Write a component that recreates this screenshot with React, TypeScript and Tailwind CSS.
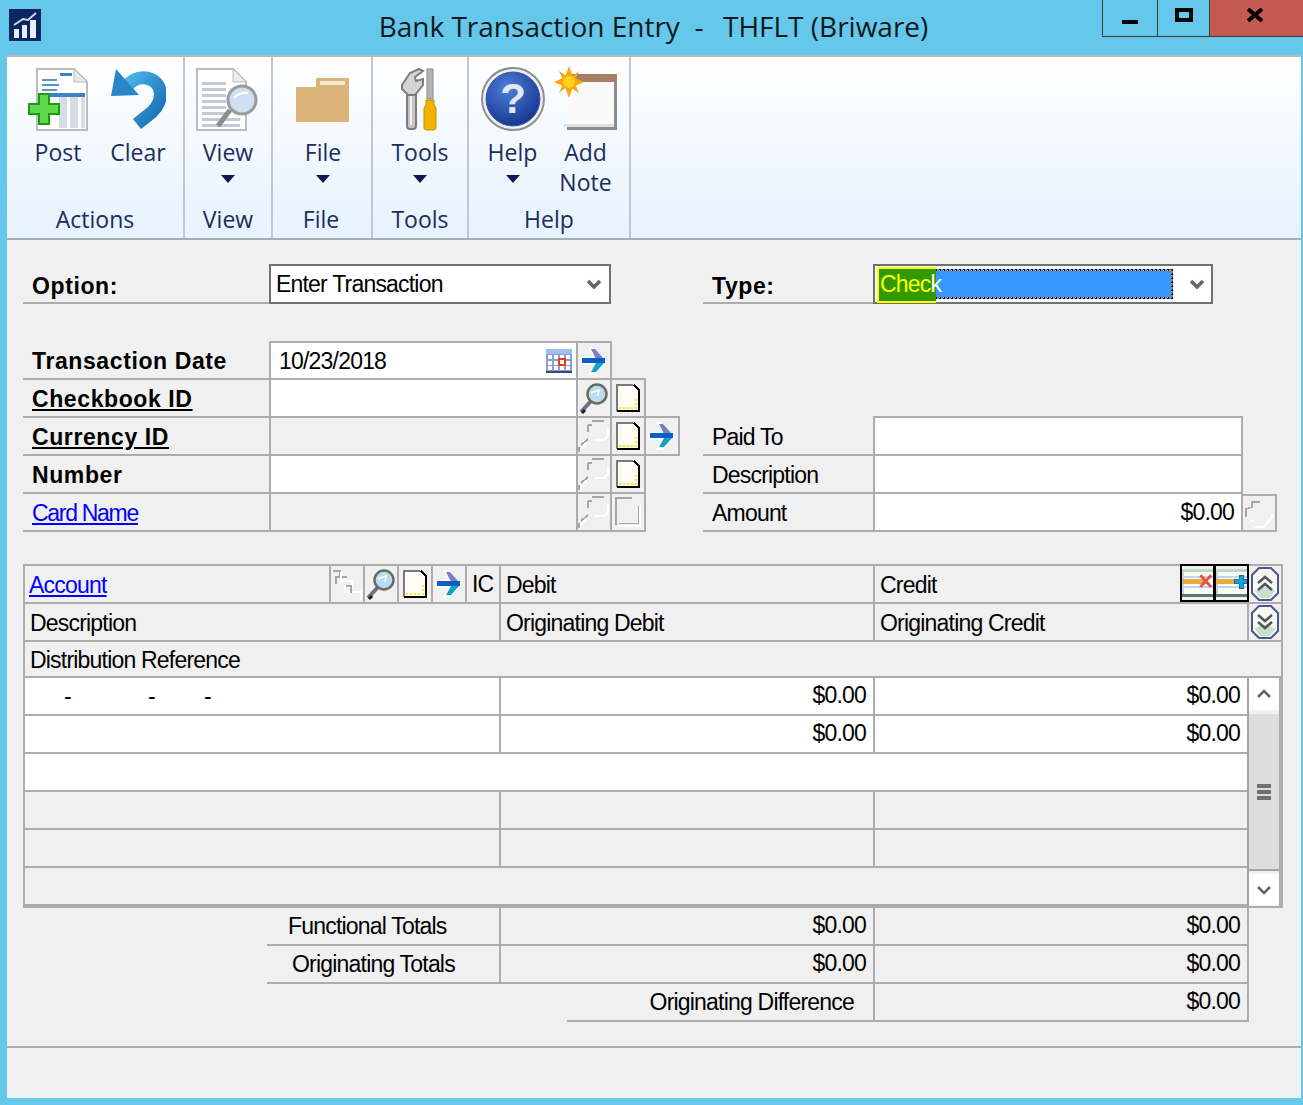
import type { ReactNode } from 'react'

function AppIcon() {
  return (
    <svg width="32" height="32" viewBox="0 0 32 32" className="block">
      <rect width="32" height="32" fill="#0b2660" />
      <rect x="5" y="20" width="5" height="9" fill="#e8eef5" />
      <rect x="13" y="16" width="5" height="13" fill="#e8eef5" />
      <rect x="21" y="11" width="6" height="18" fill="#e8eef5" />
      <path d="M5 16 L14 10 L19 11 L27 4" stroke="#cfd8e6" strokeWidth="2" fill="none" />
    </svg>
  )
}

function PostIcon() {
  return (
    <svg width="60" height="64" viewBox="0 0 60 64" className="block">
      <path d="M9 1 H46 L59 14 V62 H9 Z" fill="#fff" stroke="#bcbcbc" strokeWidth="2" />
      <path d="M46 1 V14 H59 Z" fill="#e8e8e8" stroke="#bcbcbc" />
      <rect x="32" y="5" width="12" height="3" fill="#3a83c8" />
      <rect x="14" y="11" width="15" height="2" fill="#5b94cf" />
      <rect x="14" y="16" width="17" height="2" fill="#5b94cf" />
      <rect x="14" y="21" width="15" height="2" fill="#5b94cf" />
      <rect x="14" y="25" width="43" height="4" fill="#3a83c8" />
      <rect x="31" y="29" width="8" height="31" fill="#d6dde6" />
      <rect x="42" y="29" width="8" height="31" fill="#d6dde6" />
      <rect x="53" y="29" width="4" height="31" fill="#d6dde6" />
      <path d="M11 26 H21 V36 H31 V46 H21 V56 H11 V46 H1 V36 H11 Z" fill="#5fd84a" stroke="#1e9a12" strokeWidth="2" />
    </svg>
  )
}

function ClearIcon() {
  return (
    <svg width="56" height="64" viewBox="0 0 56 64" className="block">
      <defs>
        <linearGradient id="clr" x1="0" y1="0" x2="1" y2="1">
          <stop offset="0" stopColor="#4cb5ea" />
          <stop offset="1" stopColor="#1469b0" />
        </linearGradient>
      </defs>
      <path d="M27 56 L42 44 C54 33 54 13 36 10 C28 9 22 12 17 18" stroke="url(#clr)" strokeWidth="13" fill="none" />
      <path d="M6 1 L1 28 L29 27 Z" fill="#2a86c9" />
    </svg>
  )
}

function ViewIcon() {
  return (
    <svg width="64" height="64" viewBox="0 0 64 64" className="block">
      <path d="M1 1 H37 L50 14 V62 H1 Z" fill="#fff" stroke="#bdbdbd" strokeWidth="2" />
      <path d="M37 1 V14 H50 Z" fill="#ececec" stroke="#bdbdbd" />
      {[14, 20, 26, 32, 38, 44, 50, 56].map((y) => (
        <rect key={y} x="6" y={y} width={y > 44 ? 38 : 24} height="3" fill="#c3cad4" />
      ))}
      <path d="M34 42 L22 58" stroke="#8c8c8c" strokeWidth="5" />
      <circle cx="46" cy="32" r="14" fill="#cfe0f3" stroke="#9b9b9b" strokeWidth="3" />
      <path d="M38 30 Q44 24 52 25" stroke="#fff" strokeWidth="2" fill="none" />
    </svg>
  )
}

function FolderIcon() {
  return (
    <svg width="56" height="64" viewBox="0 0 56 64" className="block">
      <path d="M1 19 H21 V11 Q21 10 23 10 H54 V54 H1 Z" fill="#dcb479" />
      <rect x="25" y="13" width="25" height="4" fill="#f3e6cc" />
    </svg>
  )
}

function ToolsIcon() {
  return (
    <svg width="40" height="64" viewBox="0 0 40 64" className="block">
      <rect x="7" y="24" width="9" height="37" rx="3" fill="#c4c4c4" stroke="#7d7d7d" strokeWidth="2" />
      <rect x="10" y="27" width="2" height="30" fill="#efefef" />
      <path d="M2 17 L10 5 L19 1 L23 3 L15 9 L16 13 L23 11 V17 L15 27 H8 L2 21 Z" fill="#d4d4d4" stroke="#7d7d7d" strokeWidth="2" />
      <rect x="27" y="1" width="6" height="30" fill="#b4b4b4" stroke="#888" />
      <path d="M26 32 H34 V37 L36 40 V60 Q36 62 33 62 H27 Q24 62 24 60 V40 L26 37 Z" fill="#f0b400" stroke="#c98f00" />
    </svg>
  )
}

function HelpIcon() {
  return (
    <svg width="66" height="66" viewBox="0 0 66 66" className="block">
      <defs>
        <radialGradient id="hlp" cx="0.4" cy="0.3" r="0.8">
          <stop offset="0" stopColor="#4f7fdc" />
          <stop offset="1" stopColor="#0d2f86" />
        </radialGradient>
      </defs>
      <circle cx="33" cy="33" r="31" fill="#eef0f3" stroke="#8d8f94" strokeWidth="2" />
      <circle cx="33" cy="33" r="27" fill="url(#hlp)" stroke="#3a5aa0" />
      <text x="33" y="47" textAnchor="middle" fontFamily="'Liberation Sans', sans-serif" fontWeight="700" fontSize="42" fill="#e4e7ee">?</text>
    </svg>
  )
}

function AddNoteIcon() {
  return (
    <svg width="66" height="66" viewBox="0 0 66 66" className="block">
      <rect x="14" y="16" width="50" height="48" fill="#8d8d8d" />
      <rect x="14" y="8" width="50" height="8" fill="#a87f66" />
      <rect x="14" y="16" width="47" height="42" fill="#fafafa" />
      <rect x="11" y="58" width="50" height="3" fill="#e0e0e0" />
      <g fill="#f6a90c">
        <path d="M16 0 L20 11 L31 16 L20 21 L16 32 L12 21 L1 16 L12 11 Z" />
        <path d="M6 5 L17 12 L26 5 L21 16 L26 27 L15 20 L6 27 L11 16 Z" />
      </g>
      <circle cx="16" cy="16" r="6" fill="#ffd21f" />
    </svg>
  )
}

function DropTriangle() {
  return (
    <svg width="14" height="8" viewBox="0 0 14 8" className="block">
      <path d="M0 0 H14 L7 8 Z" fill="#0d1a55" />
    </svg>
  )
}

function SmallLens() {
  return (
    <svg width="32" height="34" viewBox="0 0 32 34" className="block">
      <path d="M13 20 L3 31" stroke="#6e6e88" strokeWidth="4" />
      <path d="M4 32 L7 29" stroke="#222" strokeWidth="3" />
      <circle cx="19" cy="13" r="9.5" fill="#bcdcf5" stroke="#6b6b60" strokeWidth="2.5" />
      <path d="M13 12 L21 9 L20 15" stroke="#fff" strokeWidth="1.5" fill="none" />
    </svg>
  )
}

function GhostLens() {
  return (
    <svg width="32" height="34" viewBox="0 0 32 34" className="block" shapeRendering="crispEdges">
      <path d="M14 2 H26 M10 6 H14 M10 6 V13" stroke="#a6a6a6" strokeWidth="2" fill="none" />
      <path d="M30 9 V17 L26 21 H16 M9 23 L2 31 V33" stroke="#fff" strokeWidth="2.5" fill="none" />
      <path d="M3 26 L10 20 M1 28 V33" stroke="#a6a6a6" strokeWidth="2" fill="none" />
    </svg>
  )
}

function SmallDoc() {
  return (
    <svg width="26" height="30" viewBox="0 0 26 30" className="block" shapeRendering="crispEdges">
      <path d="M2 1 H18 L25 8 V29 H2 Z" fill="#fffdf6" />
      <path d="M2 28 V2 H18" stroke="#7a7a7a" strokeWidth="2" fill="none" />
      <path d="M19 2 L24 7 V28 H2" stroke="#000" strokeWidth="2" fill="none" />
      {[4, 8, 12, 16, 20].map((x) => (
        <rect key={x} x={x} y="24" width="2" height="2" fill="#ffee00" />
      ))}
      {[16, 20].map((y) => (
        <rect key={y} x="20" y={y} width="2" height="2" fill="#ffee00" />
      ))}
    </svg>
  )
}

function GhostDoc() {
  return (
    <svg width="28" height="32" viewBox="0 0 28 32" className="block" shapeRendering="crispEdges">
      <path d="M2 29 V2 H18" stroke="#a6a6a6" strokeWidth="2" fill="none" />
      <path d="M26 10 V30 H4" stroke="#fff" strokeWidth="2" fill="none" />
      <path d="M24 10 V27 H5" stroke="#a6a6a6" strokeWidth="1" fill="none" />
    </svg>
  )
}

function BlueArrow() {
  return (
    <svg width="30" height="30" viewBox="0 0 30 30" className="block">
      <path d="M13 1 L28 15 L15 29 H9 L15 19 H1 V11 H15 L9 1 Z" fill="#fff" />
      <path d="M12 3 H16 L25 13 H17 Z" fill="#7b7fc4" />
      <rect x="3" y="12" width="23" height="5" fill="#0a5fc4" />
      <path d="M17 17 H25 L17 26 H12 Z" fill="#12a3c9" />
    </svg>
  )
}

function CalendarIcon() {
  return (
    <svg width="26" height="24" viewBox="0 0 26 24" className="block" shapeRendering="crispEdges">
      <rect width="26" height="24" fill="#8b9ed0" />
      <rect width="26" height="5" fill="#9dc0ee" />
      {[2, 8, 14, 20].map((x) =>
        [6, 12, 17].map((y) => <rect key={x + '-' + y} x={x} y={y} width="4" height="4" fill="#fff" />),
      )}
      <rect x="12" y="9" width="8" height="8" fill="#e2400f" />
      <rect x="14" y="11" width="4" height="4" fill="#fff" />
      <rect y="22" width="26" height="2" fill="#3f3f88" />
    </svg>
  )
}

function GhostChain() {
  return (
    <svg width="32" height="34" viewBox="0 0 32 34" className="block" shapeRendering="crispEdges">
      <path d="M2 4 H9 V10 M5 17 V10 H16" stroke="#a6a6a6" strokeWidth="1.5" fill="none" />
      <path d="M10 5 V14 H21 V20 H14 V25 H30 V33" stroke="#fff" strokeWidth="1.5" fill="none" />
      <path d="M15 19 H20 V26" stroke="#a6a6a6" strokeWidth="1.5" fill="none" />
    </svg>
  )
}

function RowIcon({ add }: { add?: boolean }) {
  return (
    <svg width="32" height="28" viewBox="0 0 32 28" className="block" shapeRendering="crispEdges">
      <rect width="32" height="28" fill="#fbfbf4" />
      <rect width="32" height="3" fill="#bcd9c4" />
      <rect y="3" width="2" height="22" fill="#b9d4ef" />
      <rect y="7" width="32" height="2" fill="#bcd4f2" />
      <rect y="17" width="32" height="2" fill="#bcd4f2" />
      <rect y="10" width="26" height="5" fill="#e8ab3c" />
      <rect y="25" width="32" height="3" fill="#5d7675" />
      {add ? (
        <path d="M24 6 H28 V10 H32 V15 H28 V20 H24 V15 H19 V10 H24 Z" fill="#1ba0d6" stroke="#0d6f9e" />
      ) : (
        <path d="M19 6 L30 18 M30 6 L19 18" stroke="#e3534a" strokeWidth="3" shapeRendering="auto" />
      )}
    </svg>
  )
}

function ExpandIcon({ down }: { down?: boolean }) {
  return (
    <svg width="28" height="34" viewBox="0 0 28 34" className="block">
      <path d="M8 1 H20 L27 8 V26 L20 33 H8 L1 26 V8 Z" fill="#f6f8f4" stroke="#4f5590" strokeWidth="2" />
      <path d="M4 24 Q14 16 24 24 L19 31 H9 Z" fill="#c7e0cd" />
      {down ? (
        <path d="M7 10 L14 16 L21 10 M7 17 L14 23 L21 17" stroke="#555" strokeWidth="2.5" fill="none" />
      ) : (
        <path d="M7 16 L14 10 L21 16 M7 23 L14 17 L21 23" stroke="#555" strokeWidth="2.5" fill="none" />
      )}
    </svg>
  )
}

function Chevron({ up, width = 2.5 }: { up?: boolean; width?: number }) {
  return (
    <svg width="14" height="10" viewBox="0 0 14 10" className="block">
      <path d={up ? 'M1 8 L7 2 L13 8' : 'M1 2 L7 8 L13 2'} stroke="#666" strokeWidth={width} fill="none" />
    </svg>
  )
}

function RibbonButton({ icon, label, drop, w = 'w-[80px]' }: { icon: ReactNode; label: ReactNode; drop?: boolean; w?: string }) {
  return (
    <div className={w + ' flex flex-col items-center'}>
      <div className="flex h-[66px] items-end justify-center">{icon}</div>
      <div className="mt-[5px] text-center leading-[30px]">{label}</div>
      {drop && (
        <div className="mt-[8px]">
          <DropTriangle />
        </div>
      )}
    </div>
  )
}

function RibbonGroup({ title, w, pl, labelClass, children }: { title: string; w: string; pl?: string; labelClass?: string; children: ReactNode }) {
  return (
    <div className={w + ' flex h-full flex-col border-r-2 border-[#c3c7cd]'}>
      <div className={'flex h-[148px] justify-center pt-[9px] ' + (pl ?? '')}>{children}</div>
      <div className={'-mt-[1px] text-center leading-[30px] ' + (labelClass ?? '')}>{title}</div>
    </div>
  )
}

function Ribbon() {
  return (
    <div className="flex h-[185px] shrink-0 border-t-[2px] border-b-[2px] border-t-[#b3b7bb] border-b-[#a9adb3] bg-gradient-to-b from-white to-[#e6f2fd] font-['Open_Sans',sans-serif] text-[23px] text-[#1b2c5e]">
      <RibbonGroup title="Actions" w="w-[178px]" pl="pl-[6px]">
        <RibbonButton icon={<PostIcon />} label="Post" />
        <RibbonButton icon={<ClearIcon />} label="Clear" />
      </RibbonGroup>
      <RibbonGroup title="View" w="w-[88px]">
        <RibbonButton icon={<ViewIcon />} label="View" drop />
      </RibbonGroup>
      <RibbonGroup title="File" w="w-[100px]" pl="pl-[2px]" labelClass="pr-[2px]">
        <RibbonButton icon={<FolderIcon />} label="File" drop />
      </RibbonGroup>
      <RibbonGroup title="Tools" w="w-[96px]">
        <RibbonButton icon={<ToolsIcon />} label="Tools" drop />
      </RibbonGroup>
      <RibbonGroup title="Help" w="w-[162px]">
        <RibbonButton icon={<HelpIcon />} label="Help" drop w="w-[73px]" />
        <RibbonButton
          icon={<AddNoteIcon />}
          label={
            <>
              Add
              <br />
              Note
            </>
          }
          w="w-[73px]"
        />
      </RibbonGroup>
    </div>
  )
}

const boldLabel = 'font-bold tracking-[0.6px]'

// one labelled field row of the upper form
function FieldRow({ label, labelClass, white, top, children }: { label: string; labelClass?: string; white?: boolean; top?: boolean; children?: ReactNode }) {
  return (
    <div className={'flex ' + (top ? 'h-[39px]' : 'h-[38px]')}>
      <div className={'flex w-[246px] items-end border-b-2 border-[#ababb0] pl-[9px] pb-[2px] leading-[30px] ' + (labelClass ?? '')}>
        {label}
      </div>
      <div className={'w-[307px] border-b-2 border-l-2 border-[#ababb0] ' + (white ? 'bg-white ' : '') + (top ? 'border-t-2' : '')}>
        {top && (
          <div className="flex h-[35px] items-center justify-between pl-[8px] pr-[4px]">
            <span>10/23/2018</span>
            <CalendarIcon />
          </div>
        )}
      </div>
      {children}
    </div>
  )
}

// raised cells stick out past the row above, so they carry their own top line over it
function IconCell({ children, last, top, raised }: { children: ReactNode; last?: boolean; top?: boolean; raised?: boolean }) {
  return (
    <div className={'flex items-center justify-center border-b-2 border-l-2 border-[#ababb0] ' + (last ? 'w-[36px] border-r-2 ' : 'w-[34px] ') + (top ? 'border-t-2 ' : '') + (raised ? '-mt-[2px] border-t-2' : '')}>
      {children}
    </div>
  )
}

function SelectBox({ w, children }: { w: string; children: ReactNode }) {
  return (
    <div className={w + ' flex h-[40px] items-center border-2 border-[#707070] bg-white'}>
      {children}
    </div>
  )
}

function UpperForm() {
  return (
    <div className="pt-[24px] pl-[16px]">
      <div className="flex">
        <div className="flex h-[40px] w-[246px] items-end border-b-2 border-[#ababb0] pl-[9px] pb-[1px] leading-[30px]">
          <span className={boldLabel}>Option:</span>
        </div>
        <SelectBox w="w-[342px]">
          <span className="flex-1 pl-[5px]">Enter Transaction</span>
          <span className="pr-[8px]">
            <Chevron width={3.5} />
          </span>
        </SelectBox>
        <div className="ml-[92px] flex h-[40px] w-[170px] items-end border-b-2 border-[#ababb0] pl-[9px] pb-[1px] leading-[30px]">
          <span className={boldLabel}>Type:</span>
        </div>
        <SelectBox w="w-[340px]">
          <div className="relative ml-[3px] flex h-[30px] w-[295px] items-center border-2 border-dotted border-black bg-[#3399ff] outline-1 outline-dotted outline-[#e08a00] -outline-offset-2">
            <div className="absolute -left-[3px] -top-[4px] h-[36px] w-[59px] border-2 border-r-0 border-[#ffff00] bg-[#339900]" />
            <span className="relative text-[#ffff00]">
              Chec<span className="text-white">k</span>
            </span>
          </div>
          <span className="ml-auto pr-[7px]">
            <Chevron width={3.5} />
          </span>
        </SelectBox>
      </div>
      <div className="mt-[37px] flex">
        <div className="w-[664px]">
          <FieldRow label="Transaction Date" labelClass={boldLabel} white top>
            <IconCell top last>
              <BlueArrow />
            </IconCell>
          </FieldRow>
          <FieldRow label="Checkbook ID" labelClass={boldLabel + ' underline'} white>
            <IconCell>
              <SmallLens />
            </IconCell>
            <IconCell last raised>
              <SmallDoc />
            </IconCell>
          </FieldRow>
          <FieldRow label="Currency ID" labelClass={boldLabel + ' underline'}>
            <IconCell>
              <GhostLens />
            </IconCell>
            <IconCell>
              <SmallDoc />
            </IconCell>
            <IconCell last raised>
              <BlueArrow />
            </IconCell>
          </FieldRow>
          <FieldRow label="Number" labelClass={boldLabel} white>
            <IconCell>
              <GhostLens />
            </IconCell>
            <IconCell last>
              <SmallDoc />
            </IconCell>
          </FieldRow>
          <FieldRow label="Card Name" labelClass="text-[#0000ff] underline tracking-[-1.3px]">
            <IconCell>
              <GhostLens />
            </IconCell>
            <IconCell last>
              <GhostDoc />
            </IconCell>
          </FieldRow>
        </div>
        <div className="ml-[16px] pt-[75px]">
          <RightRow label="Paid To" top />
          <RightRow label="Description" />
          <RightRow label="Amount" amount />
        </div>
      </div>
    </div>
  )
}

function RightRow({ label, top, amount }: { label: string; top?: boolean; amount?: boolean }) {
  return (
    <div className={'flex ' + (top ? 'h-[40px]' : 'h-[38px]')}>
      <div className="flex w-[170px] items-end border-b-2 border-[#ababb0] pl-[9px] pb-[2px] leading-[30px]">{label}</div>
      <div className={'flex w-[370px] items-center justify-end border-x-2 border-b-2 border-[#ababb0] bg-white pr-[7px] pb-[1px] ' + (top ? 'border-t-2' : '')}>
        {amount && '$0.00'}
      </div>
      {amount && (
        <div className="flex w-[34px] items-center justify-center border-r-2 border-b-2 border-t-2 border-[#ababb0]">
          <svg width="30" height="32" viewBox="0 0 30 32" className="block" shapeRendering="crispEdges">
            <path d="M2 20 V12 L8 10 V5 H16" stroke="#a6a6a6" strokeWidth="1.5" fill="none" />
            <path d="M28 16 V20 L20 30 H10 M6 24 H10" stroke="#fff" strokeWidth="2" fill="none" />
          </svg>
        </div>
      )}
    </div>
  )
}

function Amount({ w }: { w: string }) {
  return <div className={w + ' flex items-center justify-end border-l-2 border-[#ababb0] pr-[7px] pb-[2px]'}>$0.00</div>
}

function HeaderIcon({ children }: { children: ReactNode }) {
  return <div className="flex w-[34px] items-center justify-center border-l-2 border-[#ababb0]">{children}</div>
}

function Scrollbar() {
  return (
    <div className="flex w-[34px] flex-col border-x-2 border-l-[#a3a3a3] border-r-[#ababb0]">
      <div className="flex h-[32px] items-center justify-center bg-white">
        <Chevron up />
      </div>
      <div className="mt-[4px] flex h-[157px] flex-col items-center justify-center gap-[2px] border-b-[2px] border-[#a3a3a3] bg-[#dddddd]">
        <div className="h-[4px] w-[14px] bg-[#707070]" />
        <div className="h-[4px] w-[14px] bg-[#707070]" />
        <div className="h-[4px] w-[14px] bg-[#707070]" />
      </div>
      <div className="mt-[3px] flex h-[31px] items-center justify-center bg-white">
        <Chevron />
      </div>
    </div>
  )
}

function DistributionGrid() {
  const rowLine = 'border-b-2 border-[#ababb0]'
  return (
    <div className="mt-[32px] ml-[16px] w-[1260px] border-x-2 border-t-2 border-[#ababb0] leading-[30px]">
      <div className={'flex h-[38px] ' + rowLine}>
        <div className="flex w-[304px] items-center pl-[4px] pt-[1px] text-[#0000ff] underline">Account</div>
        <HeaderIcon>
          <GhostChain />
        </HeaderIcon>
        <HeaderIcon>
          <SmallLens />
        </HeaderIcon>
        <HeaderIcon>
          <SmallDoc />
        </HeaderIcon>
        <HeaderIcon>
          <BlueArrow />
        </HeaderIcon>
        <div className="flex w-[34px] items-center border-l-2 border-[#ababb0] pl-[5px]">IC</div>
        <div className="flex w-[374px] items-center border-l-2 border-[#ababb0] pl-[5px] pt-[1px]">Debit</div>
        <div className="flex w-[307px] items-center border-l-2 border-[#ababb0] pl-[5px] pt-[1px]">Credit</div>
        <div className="flex h-[38px] w-[35px] -translate-y-[2px] items-center justify-center border-2 border-black">
          <RowIcon />
        </div>
        <div className="-ml-[1px] flex h-[38px] w-[35px] -translate-y-[2px] items-center justify-center border-2 border-black">
          <RowIcon add />
        </div>
        <div className="flex flex-1 items-center justify-center">
          <ExpandIcon />
        </div>
      </div>
      <div className={'flex h-[38px] ' + rowLine}>
        <div className="flex w-[474px] items-center pl-[5px] pt-[2px]">Description</div>
        <div className="flex w-[374px] items-center border-l-2 border-[#ababb0] pl-[5px] pt-[2px]">Originating Debit</div>
        <div className="flex w-[374px] items-center border-l-2 border-[#ababb0] pl-[5px] pt-[2px]">Originating Credit</div>
        <div className="flex flex-1 items-center justify-center border-l-2 border-[#ababb0]">
          <ExpandIcon down />
        </div>
      </div>
      <div className={'flex h-[36px] items-center pl-[5px] pt-[2px] ' + rowLine}>Distribution Reference</div>
      <div className="flex">
        <div className="w-[1222px]">
          <div className={'flex h-[38px] bg-white ' + rowLine}>
            <div className="flex w-[474px] items-center pb-[1px] pl-[39px]">
              <span className="w-[84px]">-</span>
              <span className="w-[56px]">-</span>
              <span>-</span>
            </div>
            <Amount w="w-[374px]" />
            <Amount w="w-[374px]" />
          </div>
          <div className={'flex h-[38px] bg-white ' + rowLine}>
            <div className="w-[474px]" />
            <Amount w="w-[374px]" />
            <Amount w="w-[374px]" />
          </div>
          <div className={'h-[38px] bg-white ' + rowLine} />
          <div className={'flex h-[38px] ' + rowLine}>
            <div className="w-[474px]" />
            <div className="w-[374px] border-l-2 border-[#ababb0]" />
            <div className="w-[374px] border-l-2 border-[#ababb0]" />
          </div>
          <div className={'flex h-[38px] ' + rowLine}>
            <div className="w-[474px]" />
            <div className="w-[374px] border-l-2 border-[#ababb0]" />
            <div className="w-[374px] border-l-2 border-[#ababb0]" />
          </div>
          <div className={'h-[38px] ' + rowLine} />
        </div>
        <Scrollbar />
      </div>
      <div className="h-[2px] bg-[#ababb0]" />
    </div>
  )
}

function Totals() {
  return (
    <div className="ml-[260px] w-[982px] border-r-2 border-[#ababb0] leading-[30px]">
      <div className="flex h-[38px] border-b-2 border-[#ababb0]">
        <div className="flex w-[232px] items-center pb-[1px] pl-[21px]">Functional Totals</div>
        <Amount w="w-[374px]" />
        <Amount w="w-[374px]" />
      </div>
      <div className="flex h-[38px] border-b-2 border-[#ababb0]">
        <div className="flex w-[232px] items-center pb-[1px] pl-[25px]">Originating Totals</div>
        <Amount w="w-[374px]" />
        <Amount w="w-[374px]" />
      </div>
      <div className="ml-[300px] flex h-[38px] border-b-2 border-[#ababb0]">
        <div className="flex w-[306px] items-center justify-end pb-[1px] pr-[19px]">Originating Difference</div>
        <Amount w="w-[374px]" />
      </div>
    </div>
  )
}

export default function App() {
  return (
    <div className="flex h-[1105px] w-[1303px] flex-col overflow-hidden bg-[#65c8ea]">
      <div className="grid h-[55px] shrink-0 grid-cols-[1fr_auto_1fr] font-['Open_Sans',sans-serif] text-[28px] text-[#101820]">
        <div className="pt-[9px] pl-[9px]">
          <AppIcon />
        </div>
        <div className="whitespace-pre pl-[4px] pt-[6px] leading-[40px]">
          Bank Transaction Entry  -  <span className="ml-[5px]">THFLT (Briware)</span>
        </div>
        <div className="flex h-[37px] justify-end">
          <div className="flex h-[37px] w-[55px] items-center justify-center border-b border-l border-[#3c3c3c] pt-[8px]">
            <div className="h-[4px] w-[16px] bg-black" />
          </div>
          <div className="flex h-[37px] w-[52px] items-center justify-center border-b border-l border-[#3c3c3c] pb-[6px]">
            <div className="h-[14px] w-[18px] border-[4px] border-black" />
          </div>
          <div className="flex h-[37px] w-[94px] items-center justify-center border-b border-l border-[#3c3c3c] bg-[#c25a50] pb-[6px] pr-[4px]">
            <svg width="16" height="14" viewBox="0 0 16 14" className="block">
              <path d="M1 1 L15 13 M15 1 L1 13" stroke="#000" strokeWidth="4" />
            </svg>
          </div>
        </div>
      </div>
      <div className="ml-[7px] mr-[2px] flex h-[1043px] shrink-0 flex-col bg-[#f0f0f0]">
        <Ribbon />
        <div className="font-['Liberation_Sans',sans-serif] text-[23px] leading-[30px] tracking-[-0.8px] text-black">
          <UpperForm />
          <DistributionGrid />
          <Totals />
        </div>
        <div className="mt-[24px] h-[2px] bg-[#ababb0]" />
      </div>
    </div>
  )
}
